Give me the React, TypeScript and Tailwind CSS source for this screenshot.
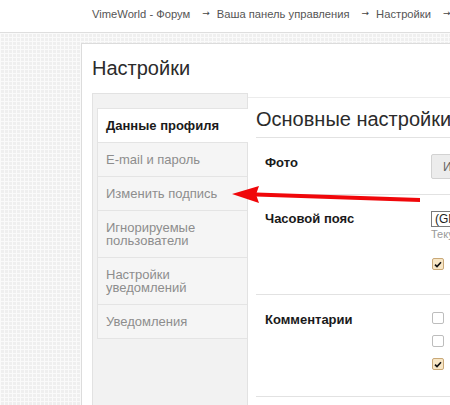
import React from "react";

const crumbs = ["VimeWorld - Форум", "Ваша панель управления", "Настройки"];

const navItems = [
  { label: "Данные профиля", active: true },
  { label: "E-mail и пароль" },
  { label: "Изменить подпись" },
  { label: "Игнорируемые\nпользователи" },
  { label: "Настройки\nуведомлений" },
  { label: "Уведомления" },
];

function Checkbox({ checked }: { checked?: boolean }) {
  return checked ? (
    <span className="flex h-[12px] w-[12px] items-center justify-center rounded-[2px] border border-[#c9a877] bg-[#f7e6c6]">
      <svg width="8" height="7" viewBox="0 0 8 7">
        <path d="M1 3.6 L3 5.6 L7 1.2" fill="none" stroke="#111" strokeWidth="1.6" />
      </svg>
    </span>
  ) : (
    <span className="block h-[12px] w-[12px] rounded-[2px] border border-[#bdbdbd] bg-white" />
  );
}

export default function App() {
  return (
    <div className="relative h-[405px] w-[450px] overflow-hidden bg-white font-['Liberation_Sans',Arial,sans-serif]">
      {/* BREADCRUMB */}
      <div className="flex h-[33px] items-center whitespace-nowrap border-b border-[#dedede] pl-[92px] pb-[4px] text-[11.2px] text-[#555]">
        {crumbs.map((c) => (
          <React.Fragment key={c}>
            <span>{c}</span>
            <span className="ml-[12px] mr-[7px] flex w-[8px] justify-center font-['DejaVu_Sans',sans-serif] text-[9px] text-[#444]">
              →
            </span>
          </React.Fragment>
        ))}
      </div>

      {/* PATTERN AREA */}
      <div className="h-[372px] bg-[#efefef] bg-[linear-gradient(90deg,#fafafa_1px,transparent_1px),linear-gradient(#fafafa_1px,transparent_1px)] bg-[size:4px_4px] pl-[81px] pt-[10px]">
        <div className="h-full border-l border-t border-[#dcdcdc] bg-white pl-[10px]">
          <h1 className="pt-[12px] pb-[13px] text-[20px] leading-[24px] text-[#2b2b2b]">Настройки</h1>

          <div className="flex h-full">
            {/* SIDEBAR */}
            <div className="w-[156px] shrink-0 border-l border-r border-t border-[#e2e2e2] bg-[#f2f2f2] pl-[4px] pt-[14px]">
              <div className="border-t border-[#e4e4e4]">
                {navItems.map((it) => (
                  <div
                    key={it.label}
                    className={
                      it.active
                        ? "-mr-[1px] whitespace-pre-line border-b border-l border-[#e4e4e4] bg-white py-[10px] pl-[8px] text-[13px] font-bold leading-[13px] text-[#1a1a1a]"
                        : "whitespace-pre-line border-b border-l border-[#e4e4e4] bg-[#f5f5f5] py-[10px] pl-[8px] text-[13px] leading-[13px] text-[#8d8d8d]"
                    }
                  >
                    {it.label}
                  </div>
                ))}
              </div>
            </div>

            {/* CONTENT */}
            <div className="mt-[4px] flex-1 whitespace-nowrap border-t border-[#ececec] bg-white pl-[8px]">
              <h2 className="border-b border-[#e2e2e2] pt-[10px] pb-[6px] text-[20px] leading-[23px] text-[#2b2b2b]">
                Основные настройки
              </h2>

              <div className="flex h-[57px] border-b border-[#e2e2e2]">
                <div className="w-[175px] pl-[9px] pt-[17px] text-[13px] font-bold leading-[16px] text-[#1a1a1a]">Фото</div>
                <div className="pt-[16px]">
                  <div className="flex h-[25px] w-[60px] items-center rounded-[2px] border border-[#d2d2d2] bg-[#ececec] pl-[11px] text-[12px] text-[#666]">
                    Изменить
                  </div>
                </div>
              </div>

              <div className="flex h-[100px] border-b border-[#e2e2e2]">
                <div className="w-[175px] pl-[9px] pt-[16px] text-[13px] font-bold leading-[16px] text-[#1a1a1a]">Часовой пояс</div>
                <div className="pt-[16px]">
                  <div className="flex h-[16px] w-[60px] items-center border border-[#7a7a7a] bg-white pl-[3px] text-[12px] text-[#222]">
                    (GMT +03:00)
                  </div>
                  <div className="mt-[1px] text-[11px] leading-[13px] text-[#999]">Текущее время</div>
                  <div className="mt-[17px] pl-[1px]">
                    <Checkbox checked />
                  </div>
                </div>
              </div>

              <div className="flex h-[102px] border-b border-[#e2e2e2]">
                <div className="w-[175px] pl-[9px] pt-[17px] text-[13px] font-bold leading-[16px] text-[#1a1a1a]">Комментарии</div>
                <div className="flex flex-col gap-[11px] pl-[1px] pt-[17px]">
                  <Checkbox />
                  <Checkbox />
                  <Checkbox checked />
                </div>
              </div>
            </div>
          </div>
        </div>
      </div>

      {/* RED ARROW */}
      <svg className="pointer-events-none absolute left-0 top-0" width="450" height="405" viewBox="0 0 450 405">
        <polygon points="256,192.5 420,198 420,202 256,196.5" fill="#f0070a" />
        <polygon points="232,194 259,186 256,194.5 259,203" fill="#f0070a" />
      </svg>
    </div>
  );
}
